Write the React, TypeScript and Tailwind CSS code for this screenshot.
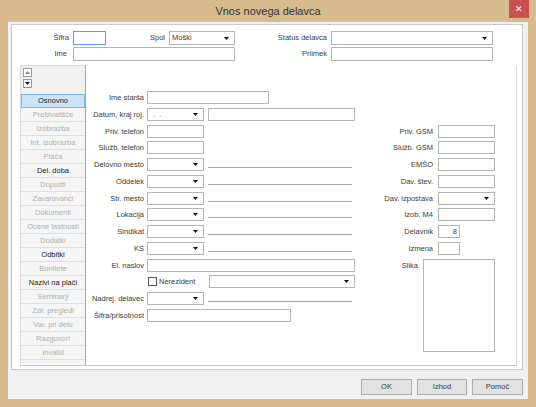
import React from "react";

const Caret = ({ color = "#111" }: { color?: string }) => (
  <svg width="5" height="3" viewBox="0 0 5 3" className="shrink-0">
    <path d="M0 0h5L2.5 3z" fill={color} />
  </svg>
);

const Box = ({ className = "", children }: { className?: string; children?: React.ReactNode }) => (
  <div className={`border border-[#b5b5b5] bg-white ${className}`}>{children}</div>
);

const Select = ({ className = "", text = "" }: { className?: string; text?: string }) => (
  <div className={`flex items-center justify-between border border-[#b5b5b5] bg-white pl-[3px] pr-[5px] ${className}`}>
    <span className="whitespace-pre">{text}</span>
    <Caret />
  </div>
);

const Line = () => <div className="ml-[4px] h-[10px] w-[144px] border-b border-[#a9a9a9]" />;

const tabs: { name: string; on?: boolean }[] = [
  { name: "Prebivališče" },
  { name: "Izobrazba" },
  { name: "Int. izobrazba" },
  { name: "Plača" },
  { name: "Del. doba", on: true },
  { name: "Dopusti" },
  { name: "Zavarovanci" },
  { name: "Dokumenti" },
  { name: "Ocene lastnosti" },
  { name: "Dodatki" },
  { name: "Odbitki", on: true },
  { name: "Bonitete" },
  { name: "Nazivi na plači", on: true },
  { name: "Seminarji" },
  { name: "Zdr. pregledi" },
  { name: "Var. pri delu" },
  { name: "Razgovori" },
  { name: "Invalid" },
];

const Row = ({ label, children }: { label: string; children?: React.ReactNode }) => (
  <div className="flex h-[16.75px] items-start">
    <div className="w-[58px] shrink-0 whitespace-nowrap text-right leading-[13px]">{label}</div>
    <div className="ml-[3px] flex h-[13px] items-start">{children}</div>
  </div>
);

const RightRow = ({ label, children }: { label: string; children?: React.ReactNode }) => (
  <div className="flex h-[16.75px] items-start">
    <div className="w-[73px] shrink-0 whitespace-nowrap text-right leading-[13px]">{label}</div>
    <div className="ml-[5px] flex h-[13px] items-start">{children}</div>
  </div>
);

export default function App() {
  return (
    <div className="flex h-[407px] w-[536px] flex-col bg-[#d7ba8e] px-[8px] pb-[8px] font-['Liberation_Sans',Arial,sans-serif] text-[7.5px] text-[#3a3a3a]">
      <div className="grid h-[22px] grid-cols-[1fr_auto_1fr] items-center">
        <div />
        <div className="text-[11px] text-[#333]">Vnos novega delavca</div>
        <div className="flex h-full items-start justify-end">
          <div className="mr-[-1px] flex h-[18px] w-[20px] items-center justify-center bg-[#c9504f] text-[9px] leading-none text-white">
            ✕
          </div>
        </div>
      </div>

      <div className="flex flex-1 flex-col bg-[#f0f0f0]">
        <div className="ml-[3px] mr-[5px] mt-[2px] flex h-[346px] flex-col border border-[#c9c9c9] bg-white pt-[6px]">
          <div className="flex h-[14px] items-stretch leading-[14px]">
            <div className="w-[61px] pr-[4px] text-right">Šifra</div>
            <div className="w-[33px] border border-[#569de5] bg-white" />
            <div className="w-[63px] pr-[4px] text-right">Spol</div>
            <div className="flex w-[66px] items-center justify-between border border-[#b5b5b5] pl-[2px] pr-[5px]">
              <span>Moški</span>
              <Caret />
            </div>
            <div className="w-[96px] pr-[4px] text-right">Status delavca</div>
            <div className="flex w-[162px] items-center justify-end border border-[#b5b5b5] pr-[5px]">
              <Caret />
            </div>
          </div>
          <div className="mt-[2px] flex h-[14px] items-stretch leading-[14px]">
            <div className="w-[61px] pr-[6px] text-right">Ime</div>
            <div className="w-[162px] border border-[#b5b5b5]" />
            <div className="w-[96px] pr-[4px] text-right">Priimek</div>
            <div className="w-[162px] border border-[#b5b5b5]" />
          </div>

          <div className="ml-[8px] mr-[5px] mt-[4px] flex h-[301px] border-b border-[#c8c8c8]">
            <div className="flex w-[65px] shrink-0 flex-col border-l border-t border-[#d9d9d9]">
              <div className="flex h-[28px] flex-col gap-[2px] bg-[#f0f0f0] pl-[2px] pt-[2px]">
                <div className="flex h-[9px] w-[9px] items-center justify-center border border-[#9a9a9a] bg-white">
                  <svg width="5" height="3" viewBox="0 0 5 3">
                    <path d="M0 3h5L2.5 0z" fill="#888" />
                  </svg>
                </div>
                <div className="flex h-[9px] w-[9px] items-center justify-center border border-[#9a9a9a] bg-white">
                  <Caret />
                </div>
              </div>
              <div className="h-[14px] border border-[#7eb4ea] bg-[#cce4f7] text-center leading-[12px] text-[#1a1a1a]">
                Osnovno
              </div>
              {tabs.map((t) => (
                <div
                  key={t.name}
                  className={`h-[14px] whitespace-nowrap border-b border-[#dedede] bg-[#f5f5f5] text-center leading-[13px] ${t.on ? "text-[#1a1a1a]" : "text-[#b0b0b0]"}`}
                >
                  {t.name}
                </div>
              ))}
              <div className="flex-1 bg-[#f5f5f5]" />
            </div>

            <div className="flex flex-1 border-l border-r border-l-[#7eb4ea] border-r-[#d5d5d5] bg-white">
              <div className="flex w-[274px] shrink-0 flex-col pt-[26px]">
                <Row label="Ime starša">
                  <Box className="h-[13px] w-[122px]" />
                </Row>
                <Row label="Datum, kraj roj.">
                  <Select className="h-[13px] w-[57px] text-[#666]" text=" .  ." />
                  <Box className="ml-[4px] h-[13px] w-[147px]" />
                </Row>
                <Row label="Priv. telefon">
                  <Box className="h-[13px] w-[57px]" />
                </Row>
                <Row label="Služb. telefon">
                  <Box className="h-[13px] w-[57px]" />
                </Row>
                <Row label="Delovno mesto">
                  <Select className="h-[13px] w-[57px]" />
                  <Line />
                </Row>
                <Row label="Oddelek">
                  <Select className="h-[13px] w-[57px]" />
                  <Line />
                </Row>
                <Row label="Str. mesto">
                  <Select className="h-[13px] w-[57px]" />
                  <Line />
                </Row>
                <Row label="Lokacija">
                  <Select className="h-[13px] w-[57px]" />
                  <Line />
                </Row>
                <Row label="Sindikat">
                  <Select className="h-[13px] w-[57px]" />
                  <Line />
                </Row>
                <Row label="KS">
                  <Select className="h-[13px] w-[57px]" />
                  <Line />
                </Row>
                <Row label="El. naslov">
                  <Box className="h-[13px] w-[208px]" />
                </Row>
                <Row label="">
                  <div className="flex w-[62px] items-center">
                    <div className="ml-[1px] h-[9px] w-[9px] border border-[#555] bg-white" />
                    <span className="ml-[2px] leading-[13px]">Nerezident</span>
                  </div>
                  <Select className="h-[13px] w-[146px]" />
                </Row>
                <Row label="Nadrej. delavec">
                  <Select className="h-[13px] w-[57px]" />
                  <Line />
                </Row>
                <Row label="Šifra/prisotnost">
                  <Box className="h-[13px] w-[144px]" />
                </Row>
              </div>

              <div className="flex flex-1 flex-col pt-[59.5px]">
                <RightRow label="Priv. GSM">
                  <Box className="h-[13px] w-[57px]" />
                </RightRow>
                <RightRow label="Služb. GSM">
                  <Box className="h-[13px] w-[57px]" />
                </RightRow>
                <RightRow label="EMŠO">
                  <Box className="h-[13px] w-[57px]" />
                </RightRow>
                <RightRow label="Dav. štev.">
                  <Box className="h-[13px] w-[57px]" />
                </RightRow>
                <RightRow label="Dav. izpostava">
                  <Select className="h-[13px] w-[57px]" />
                </RightRow>
                <RightRow label="Izob. M4">
                  <Box className="h-[13px] w-[57px]" />
                </RightRow>
                <RightRow label="Delavnik">
                  <Box className="h-[13px] w-[22px] pr-[2px] text-right leading-[11px]">8</Box>
                </RightRow>
                <RightRow label="Izmena">
                  <Box className="h-[13px] w-[22px]" />
                </RightRow>
                <div className="flex">
                  <div className="w-[63px] pr-[5px] text-right leading-[13px]">Slika</div>
                  <Box className="h-[93px] w-[72px]" />
                </div>
              </div>
            </div>
          </div>
        </div>

        <div className="mt-[9px] flex h-[16px] justify-end gap-[5px] pr-[5px]">
          <button className="w-[51px] border border-[#adadad] bg-[#e1e1e1] text-[7.5px] font-normal">OK</button>
          <button className="w-[50px] border border-[#adadad] bg-[#e1e1e1] text-[7.5px] font-normal">Izhod</button>
          <button className="w-[51px] border border-[#adadad] bg-[#e1e1e1] text-[7.5px] font-normal">Pomoč</button>
        </div>
      </div>
    </div>
  );
}
